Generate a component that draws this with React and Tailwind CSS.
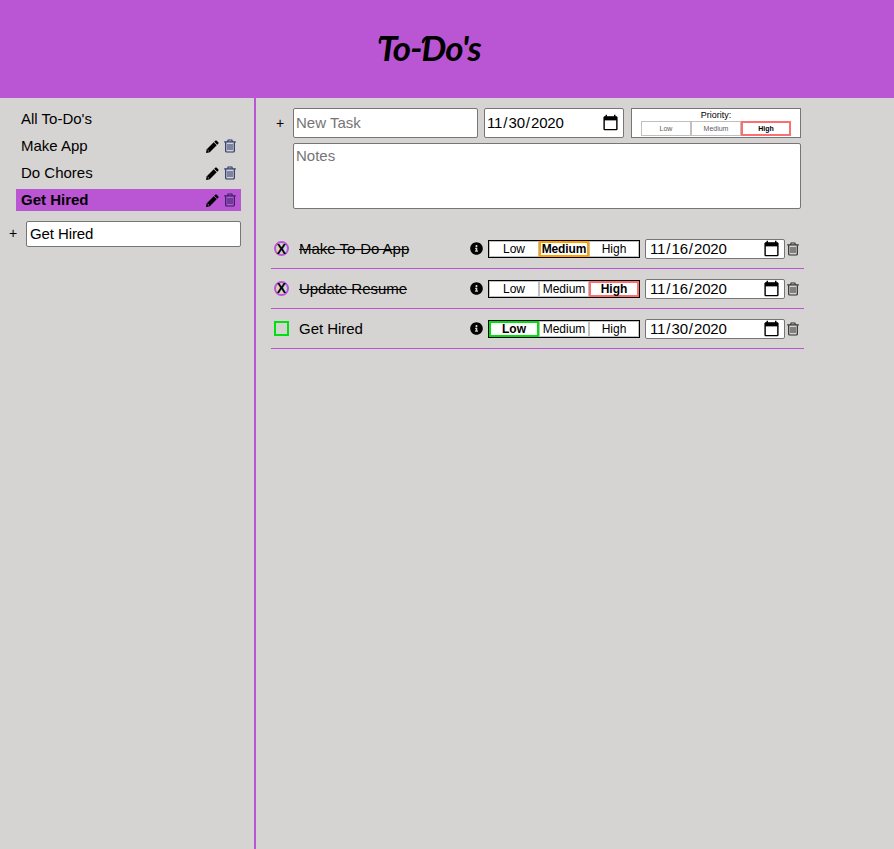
import React from "react";
import { FaInfoCircle } from "react-icons/fa";

function Pencil({ className }) {
  return (
    <svg viewBox="0 0 13 13" className={className}>
      <path d="M9.3 0.7Q10 0 10.7 0.7L12.3 2.3Q13 3 12.3 3.7L11.2 4.8L8.2 1.8Z" fill="currentColor" />
      <path d="M7.7 2.3L10.7 5.3L3.8 12.2L0.4 13Q0 13 0 12.6L0.8 9.2Z" fill="currentColor" />
      <path d="M1.6 10L3 11.4" stroke="#d6d4d2" strokeWidth="0.7" />
    </svg>
  );
}

function Trash({ className }) {
  return (
    <svg viewBox="0 0 12 14" className={className} fill="none" stroke="currentColor">
      <path d="M0.2 2.9H11.8" strokeWidth="1.2" />
      <path d="M3.6 2.7L4.1 1H7.9L8.4 2.7" strokeWidth="1.1" />
      <path d="M1.7 3.2V12Q1.7 13 2.7 13H9.3Q10.3 13 10.3 12V3.2" strokeWidth="1.2" />
      <path d="M4 5V11M6 5V11M8 5V11" strokeWidth="1" />
    </svg>
  );
}

function Calendar() {
  return (
    <svg viewBox="0 0 24 24" className="h-[17px] w-[17px] shrink-0" fill="currentColor">
      <path d="M20 3h-1V1h-2v2H7V1H5v2H4c-1.1 0-2 .9-2 2v16c0 1.1.9 2 2 2h16c1.1 0 2-.9 2-2V5c0-1.1-.9-2-2-2zm0 18H4V8h16v13z" />
      <path d="M3 4H21V9H3Z" />
    </svg>
  );
}

function DateField({ value, className }) {
  return (
    <div className={`flex w-[140px] shrink-0 items-center justify-between rounded-[2px] border border-[#767676] bg-white pr-[4px] ${className}`}>
      <span className="tracking-[-0.12px]">
        {value.split("/").map((part, i) => (
          <React.Fragment key={i}>
            {i > 0 && <span className="px-[1px]">/</span>}
            {part}
          </React.Fragment>
        ))}
      </span>
      <Calendar />
    </div>
  );
}

const ACTIVE = {
  Low: "border-2 border-[#00e010] font-bold text-black",
  Medium: "border-2 border-[#ffa000] font-bold text-black tracking-[-0.1px]",
  High: "border-2 border-[#fa7070] font-bold text-black",
};

function Levels({ active }) {
  return ["Low", "Medium", "High"].map((level) => (
    <div
      key={level}
      className={`flex w-[50px] items-center justify-center ${level === active ? ACTIVE[level] : "border border-[#c0c0c0]"}`}
    >
      <span>{level}</span>
    </div>
  ));
}

function Project({ name, selected }) {
  return (
    <div className={`flex h-[22px] items-center pl-[5px] pr-[5px] ${selected ? "bg-[#ba55d3] font-bold" : ""}`}>
      <span className="flex-1 pb-[2px]">{name}</span>
      <Pencil className="mr-[5px] h-[13px] w-[13px]" />
      <Trash className={`h-[14px] w-[12px] ${selected ? "text-[#2b2060]" : "text-[#26336a]"}`} />
    </div>
  );
}

function Task({ name, done, level, date }) {
  return (
    <div className="flex h-[40px] items-center border-b border-[#ba55d3] pl-[3px]">
      {done ? (
        <div className="flex h-[15px] w-[15px] items-center justify-center rounded-full border-2 border-[#ba55d3] pb-[2px] text-[14px] font-bold leading-none">
          <span className="scale-y-110">X</span>
        </div>
      ) : (
        <div className="h-[15px] w-[15px] border-2 border-[#00e010]" />
      )}
      <span className={`ml-[10px] w-[171px] tracking-[-0.03px] ${done ? "line-through" : ""}`}>{name}</span>
      <FaInfoCircle className="h-[13px] w-[13px]" />
      <div className="ml-[5px] flex h-[18px] w-[152px] border border-black bg-white text-[12px] leading-[12px]">
        <Levels active={level} />
      </div>
      <DateField value={date} className="ml-[5px] h-[20px] pl-[4px]" />
      <Trash className="ml-[2px] h-[14px] w-[12px] text-[#302c2c]" />
    </div>
  );
}

export default function App() {
  return (
    <div className="flex h-[849px] w-[894px] flex-col bg-[#d6d4d2] font-['Liberation_Sans',Arial,sans-serif] text-[15px] leading-[17px] text-black">
      <header className="flex h-[98px] items-center bg-[#ba55d3] pb-[3px] pl-[378px]">
        <h1 className="relative font-['Lato',sans-serif] text-[35px] font-bold italic leading-none tracking-[-0.9px]">
          To-Do's
          <svg viewBox="0 0 60 14" className="absolute left-0 top-[4px] h-[14px] w-[60px]" fill="none" stroke="currentColor" strokeWidth="2.6" strokeLinecap="round">
            <path d="M6 3.3Q1 4 2 8.5" />
            <path d="M51 3.3Q46 3.5 45 8" />
          </svg>
        </h1>
      </header>
      <div className="flex flex-1">
        <aside className="w-[256px] border-r-2 border-[#ba55d3] pt-[10px]">
          <div className="ml-[16px] flex w-[225px] flex-col gap-[5px]">
            <div className="flex h-[22px] items-center pb-[2px] pl-[5px]">All To-Do's</div>
            <Project name="Make App" />
            <Project name="Do Chores" />
            <Project name="Get Hired" selected />
          </div>
          <div className="mt-[10px] flex items-center pl-[9px]">
            <span className="w-[17px] pb-[2px] text-[14px]">+</span>
            <div className="flex h-[26px] w-[215px] items-center rounded-[2px] border border-[#767676] bg-white pb-[2px] pl-[3px] tracking-[-0.1px]">Get Hired</div>
          </div>
        </aside>
        <main className="w-[548px] pl-[15px] pt-[10px]">
          <div className="flex h-[30px] items-center pl-[5px]">
            <span className="w-[17px] text-[14px]">+</span>
            <div className="flex h-[30px] w-[185px] items-center rounded-[2px] border border-[#767676] bg-white pb-[2px] pl-[2px] text-[#757575]">New Task</div>
            <DateField value="11/30/2020" className="ml-[6px] h-[30px] pb-[2px] pl-[2px]" />
            <div className="ml-[7px] flex h-[30px] w-[170px] flex-col items-center border border-[#767676] bg-white pt-[1px]">
              <div className="text-[9px] leading-[11px]">Priority:</div>
              <div className="flex h-[15px] text-[7px] leading-[7px] text-[#606060]">
                <Levels active="High" />
              </div>
            </div>
          </div>
          <div className="ml-[22px] mt-[5px] h-[66px] w-[508px] rounded-[2px] border border-[#767676] bg-white pl-[2px] pt-[3px] text-[#757575]">Notes</div>
          <div className="mt-[20px]">
            <Task name="Make To-Do App" done level="Medium" date="11/16/2020" />
            <Task name="Update Resume" done level="High" date="11/16/2020" />
            <Task name="Get Hired" level="Low" date="11/30/2020" />
          </div>
        </main>
      </div>
    </div>
  );
}
